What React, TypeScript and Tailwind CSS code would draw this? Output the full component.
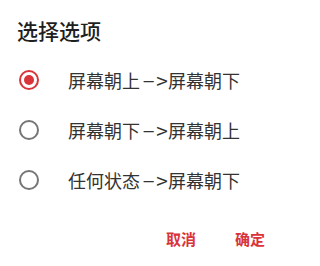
import React, { useState } from 'react'

const options = [
  ['屏幕朝上', '屏幕朝下'],
  ['屏幕朝下', '屏幕朝上'],
  ['任何状态', '屏幕朝下'],
]

// 单选按钮圆圈
const Radio: React.FC<{ checked: boolean }> = ({ checked }) => (
  <span
    className={`flex h-[20px] w-[20px] items-center justify-center rounded-full border-2 ${
      checked ? 'border-[#d8343a]' : 'border-[#767676]'
    }`}
  >
    {checked && <span className="h-[10px] w-[10px] rounded-full bg-[#d8343a]" />}
  </span>
)

export default function App() {
  const [selected, setSelected] = useState(0)

  return (
    <div
      className="h-[266px] w-[275px] bg-white"
      style={{ fontFamily: '"Noto Sans CJK SC", "Noto Sans", sans-serif' }}
    >
      {/* 标题 */}
      <h2 className="pl-[17px] pt-[16px] text-[21px] font-medium leading-[28px] text-[#1f1f1f]">选择选项</h2>

      {/* 选项列表 */}
      <div className="mt-[11px] flex flex-col">
        {options.map(([from, to], i) => (
          <button
            key={from + to}
            onClick={() => setSelected(i)}
            className="flex h-[50px] items-center text-left"
          >
            <span className="ml-[19px] mr-[29px]">
              <Radio checked={selected === i} />
            </span>
            <span className="whitespace-nowrap text-[18px] leading-[24px] text-[#333333]">
              {from}
              <span className="inline-block w-[17px] -translate-y-[1px] scale-x-[2.2] text-center">-</span>
              <span className="inline-block w-[11px] scale-[1.15]">&gt;</span>
              {to}
            </span>
          </button>
        ))}
      </div>

      {/* 底部按钮 */}
      <div className="mt-[24px] flex justify-end gap-[39px] pr-[10px] text-[15px] font-bold leading-[20px] text-[#d8343a]">
        <button>取消</button>
        <button>确定</button>
      </div>
    </div>
  )
}
